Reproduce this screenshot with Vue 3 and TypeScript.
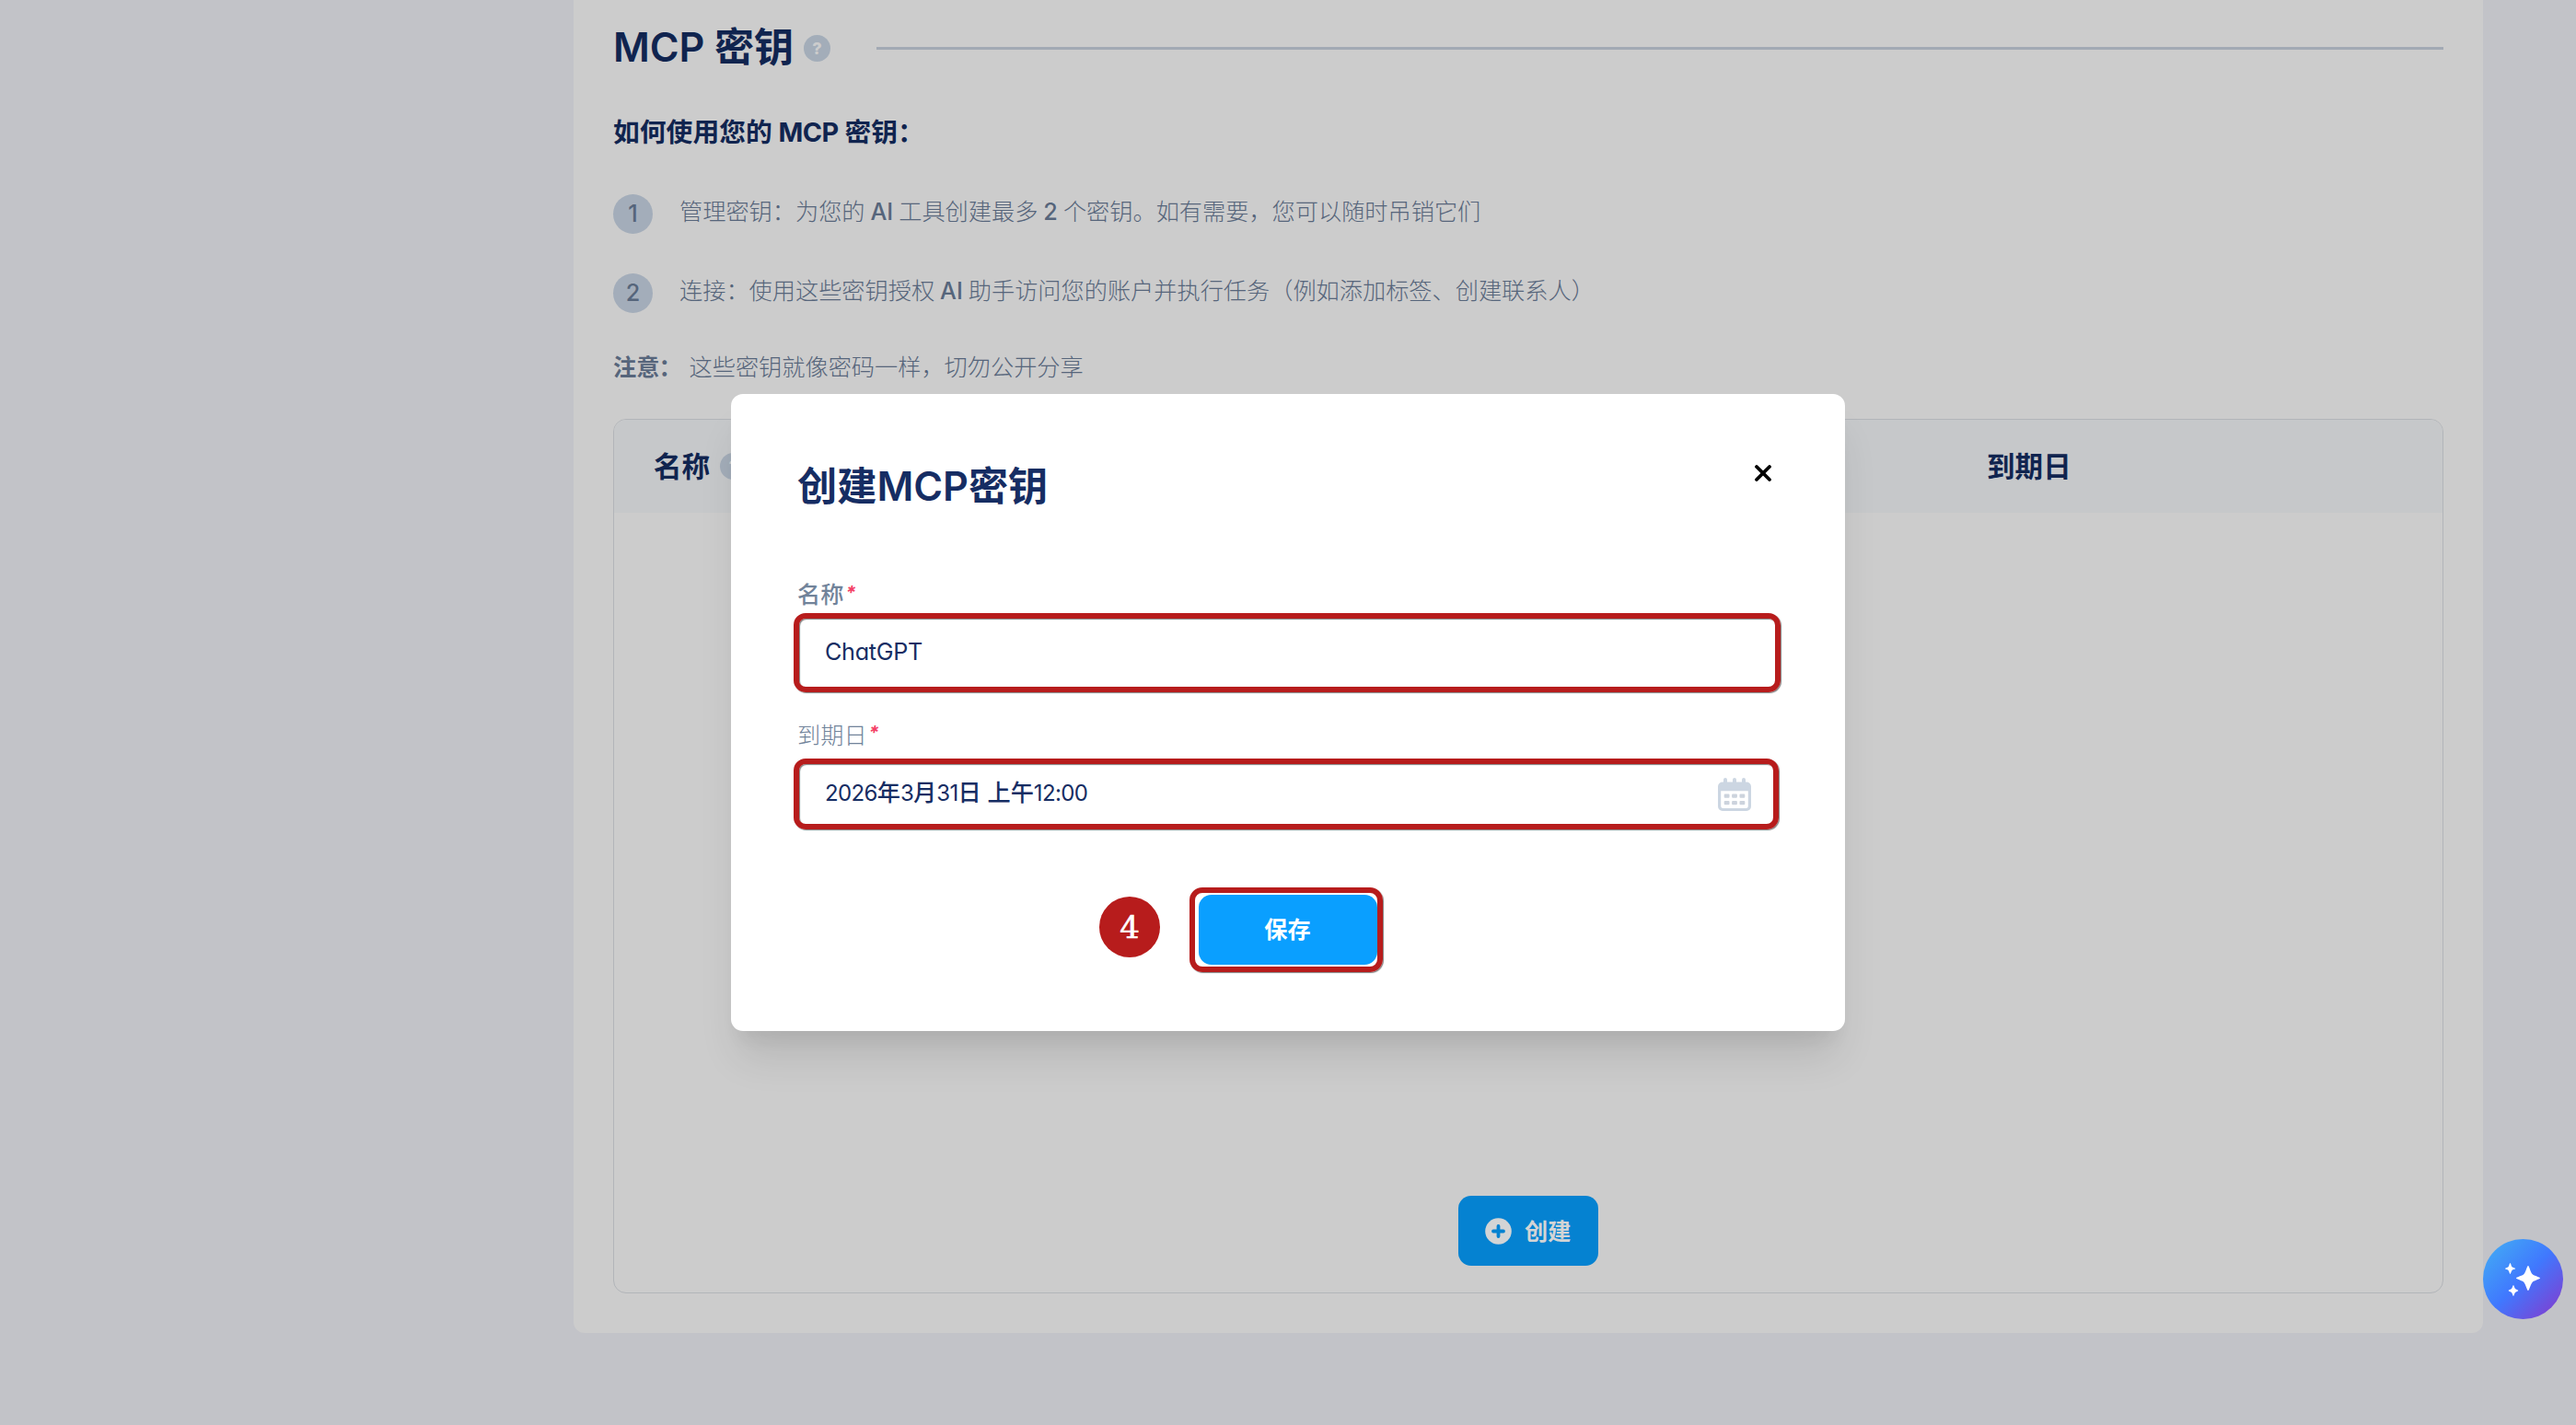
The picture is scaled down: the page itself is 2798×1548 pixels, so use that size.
<script setup lang="ts">
import { ref } from 'vue'

interface Part {
  text: string
  latin?: boolean
}

const steps: Part[][] = [
  [
    { text: '管理密钥：为您的' },
    { text: 'AI', latin: true },
    { text: '工具创建最多' },
    { text: '2', latin: true },
    { text: '个密钥。如有需要，您可以随时吊销它们' },
  ],
  [
    { text: '连接：使用这些密钥授权' },
    { text: 'AI', latin: true },
    { text: '助手访问您的账户并执行任务（例如添加标签、创建联系人）' },
  ],
]

const name = ref('ChatGPT')
</script>

<template>
  <div class="page">
    <main class="card">
      <header class="title-row">
        <h1>MCP 密钥</h1>
        <span class="help">?</span>
        <i class="rule"></i>
      </header>
      <h2>如何使用您的 <span class="mcp">MCP</span> 密钥：</h2>
      <ol class="steps">
        <li v-for="(parts, i) in steps" :key="i">
          <span class="num">{{ i + 1 }}</span>
          <p><span v-for="(p, j) in parts" :key="j" :class="{ lat: p.latin }">{{ p.text }}</span></p>
        </li>
      </ol>
      <p class="note"><b>注意<span class="colon">：</span></b><span>这些密钥就像密码一样，切勿公开分享</span></p>
      <section class="table">
        <div class="thead">
          <div class="th"><span class="th-text">名称</span><span class="help">?</span></div>
          <div class="th second"><span class="th-text">到期日</span></div>
        </div>
        <div class="tbody">
          <button class="create">
            <svg width="29" height="29" viewBox="0 0 29 29">
              <circle cx="14.5" cy="14.5" r="14.3" fill="#d3d4d5" />
              <path d="M14.5 9v11M9 14.5h11" stroke="#0582d1" stroke-width="3.8" stroke-linecap="round" />
            </svg>
            <span class="btn-text">创建</span>
          </button>
        </div>
      </section>
    </main>

    <div class="overlay">
      <div class="modal" role="dialog">
        <div class="modal-head">
          <h3>创建MCP密钥</h3>
          <svg class="close" width="20" height="20" viewBox="0 0 20 20">
            <path d="M3 3l14 14M17 3L3 17" stroke="#000" stroke-width="3.8" stroke-linecap="round" />
          </svg>
        </div>
        <label class="label strong">名称<em>*</em></label>
        <div class="field name"><span>{{ name }}</span></div>
        <label class="label light">到期日<em>*</em></label>
        <div class="field date">
          <span class="value"><span class="d">2026</span>年<span class="d">3</span>月<span class="d">31</span>日 上午<span class="d">12:00</span></span>
          <svg width="36" height="36" viewBox="0 0 36 36">
            <path fill="#ccd6e2" fill-rule="evenodd" d="M6 2a2 2 0 0 1 4 0v2.500h6V2a2 2 0 0 1 4 0v2.500h6V2a2 2 0 0 1 4 0v2.500h1a5 5 0 0 1 5 5V31a5 5 0 0 1-5 5H5a5 5 0 0 1-5-5V9.500a5 5 0 0 1 5-5h1zM3.200 14.300V30.500a2.500 2.500 0 0 0 2.500 2.500h24.600a2.500 2.500 0 0 0 2.500-2.500V14.300z" />
            <g fill="#ccd3dd">
              <rect v-for="k in 6" :key="k" :x="6.700 + ((k - 1) % 3) * 8.400" :y="k < 4 ? 17.500 : 25" width="5.800" height="4.300" rx="1" />
            </g>
          </svg>
        </div>
        <div class="actions">
          <span class="marker">4</span>
          <div class="ring"><button class="save">保存</button></div>
        </div>
      </div>
    </div>

    <div class="fab">
      <svg width="87" height="87" viewBox="0 0 87 87" fill="#fff">
        <path d="M49 29c1.200 0 2.800 8 4.800 9.300C55.500 40 62 41.500 62 42.500S55.500 45 53.800 46.700C51.800 48.500 50.200 56 49 56s-2.800-7.500-4.800-9.300C42.500 45 36 43.500 36 42.500s6.500-2.500 8.200-4.200C46.200 37 47.800 29 49 29z" />
        <path d="M29.500 26c.6 0 1.200 3.400 2 4.200s3.800 1.300 3.800 1.900-3 1.100-3.800 1.900-1.400 4-2 4-1.200-3.200-2-4-3.600-1.300-3.600-1.900 2.800-1.100 3.600-1.900 1.400-4.200 2-4.200z" />
        <path d="M33 50c.6 0 1.200 3.200 2 4s3.300 1.400 3.300 2-2.500 1.200-3.300 2-1.400 4-2 4-1.200-3.200-2-4-3.400-1.400-3.400-2 2.600-1.200 3.400-2 1.400-4 2-4z" />
      </svg>
    </div>
  </div>
</template>

<style>
body {
  margin: 0;
}
</style>

<style scoped>
* {
  box-sizing: border-box;
}
.page {
  position: relative;
  width: 2798px;
  height: 1548px;
  overflow: hidden;
  background: #c2c3c8;
  font-family: Inter, 'Noto Sans CJK SC', sans-serif;
  color: #10244f;
}
h1,
h2,
h3,
p,
ol {
  margin: 0;
  padding: 0;
}
.card {
  margin-left: 623px;
  width: 2074px;
  height: 1448px;
  padding: 0 43px;
  background: #ccc;
  border-radius: 0 0 12px 12px;
}
.title-row {
  display: flex;
  align-items: center;
  height: 104px;
}
h1 {
  width: 207px;
  padding-bottom: 8px;
  font-size: 43.200px;
  font-weight: 600;
  letter-spacing: -0.1px;
  white-space: nowrap;
}
.help {
  display: flex;
  align-items: center;
  justify-content: center;
  width: 29px;
  height: 29px;
  border-radius: 50%;
  background: #a3adb9;
  color: #ccc;
  font-size: 18px;
  font-weight: 800;
}
.rule {
  margin-left: 50px;
  flex: 1;
  height: 3px;
  background: #a2a9b4;
}
h2 {
  height: 78px;
  line-height: 80px;
  font-size: 28.800px;
  font-weight: 700;
}
.mcp {
  letter-spacing: -0.6px;
}
.colon {
  margin-left: -1px;
}
.steps {
  margin-top: 29px;
  list-style: none;
}
li {
  display: flex;
  align-items: center;
  height: 43px;
  margin-bottom: 43px;
  color: #56657b;
  font-size: 25.200px;
}
li p {
  font-weight: 300;
  white-space: nowrap;
  line-height: 43px;
  margin-top: -4px;
}
.lat {
  font-weight: 500;
  margin: 0 6px;
}
.num {
  width: 43px;
  height: 43px;
  margin-right: 29px;
  border-radius: 50%;
  background: #a3adba;
  text-align: center;
  line-height: 42px;
  font-weight: 500;
}
.note {
  display: flex;
  height: 40px;
  margin: -4px 0 36px;
  line-height: 40px;
  font-size: 25.200px;
  font-weight: 300;
  color: #56657b;
}
.note b {
  width: 82.500px;
  font-weight: 700;
}
.table {
  display: flex;
  flex-direction: column;
  height: 950px;
  border: 1px solid #b2b5b9;
  border-radius: 14px;
  overflow: hidden;
}
.thead {
  display: flex;
  height: 101px;
  background: #c6c8ca;
}
.th {
  display: flex;
  align-items: center;
  width: 1448px;
  padding-left: 43px;
  font-size: 30.600px;
  font-weight: 600;
}
.th-text {
  padding-bottom: 3px;
}
.th .help {
  margin-left: 11px;
}
.th.second {
  width: auto;
}
.tbody {
  flex: 1;
  display: flex;
  align-items: flex-end;
  justify-content: center;
  padding-bottom: 29px;
}
button {
  border: 0;
  font-family: inherit;
  font-size: 25.200px;
  font-weight: 700;
  border-radius: 14px;
}
.create {
  display: flex;
  align-items: center;
  gap: 14px;
  width: 152px;
  height: 76px;
  padding: 0 0 0 29px;
  background: #0582d1;
  color: #d3d4d5;
}
.btn-text {
  padding-bottom: 3px;
}
.overlay {
  position: absolute;
  inset: 0;
  display: flex;
  align-items: center;
  justify-content: center;
}
.modal {
  width: 1210px;
  height: 692px;
  padding: 0 70px 0 68px;
  background: #fff;
  border-radius: 13px;
  box-shadow: 0 36px 45px -9px rgba(0, 0, 0, 0.11), 0 18px 18px -9px rgba(0, 0, 0, 0.05);
  color: #162d63;
}
.modal-head {
  display: flex;
  justify-content: space-between;
  height: 198px;
  padding: 66px 9px 0 4px;
}
h3 {
  height: 70px;
  line-height: 69px;
  font-size: 43.200px;
  font-weight: 600;
}
.close {
  margin-top: 10px;
}
.label {
  display: flex;
  height: 40px;
  padding-left: 4px;
  line-height: 40px;
  font-size: 25.200px;
  color: #71839a;
}
.label em {
  margin-left: 2px;
  color: #f43f66;
  font-weight: 700;
  font-size: 20px;
  line-height: 37px;
}
.strong {
  font-weight: 500;
}
.light {
  margin-top: 26px;
  height: 46px;
  line-height: 42px;
  font-weight: 300;
}
.field {
  display: flex;
  align-items: center;
  justify-content: space-between;
  border: 6px solid #b71c1c;
  border-radius: 13px;
  box-shadow: 1px 1px 1px rgba(0, 0, 0, 0.5), inset 1px 1px 1px rgba(0, 0, 0, 0.5);
  padding: 0 24px 0 28px;
  font-size: 25.200px;
  font-feature-settings: 'cv11';
  white-space: nowrap;
}
.name {
  width: 1072px;
  height: 86px;
  letter-spacing: -0.3px;
}
.name span {
  padding-bottom: 2px;
}
.date {
  width: 1070px;
  height: 77px;
}
.value {
  padding-bottom: 7px;
  font-weight: 500;
}
.d {
  font-size: 24px;
  font-weight: 400;
  letter-spacing: -0.65px;
}
.actions {
  display: flex;
  align-items: center;
  margin: 63px 0 0 332px;
  gap: 32px;
}
.marker {
  width: 66px;
  height: 66px;
  margin-top: -6px;
  border-radius: 50%;
  background: #b71c1c;
  color: #fff;
  font: 34px/66px 'DejaVu Serif', serif;
  -webkit-text-stroke: 0.6px #fff;
  text-align: center;
}
.ring {
  width: 210px;
  height: 92px;
  padding: 2px 0 0 4px;
  border: 6px solid #b71c1c;
  border-radius: 14px;
  box-shadow: 1px 1px 1px rgba(0, 0, 0, 0.5);
}
.save {
  display: block;
  width: 194px;
  height: 76px;
  padding: 0 1px 4px 0;
  background: #0a9fff;
  color: #fff;
}
.fab {
  position: absolute;
  left: 2697px;
  top: 1346px;
  width: 87px;
  height: 87px;
  border-radius: 50%;
  background: linear-gradient(135deg, #42a8f5 8%, #4078fe 50%, #7e40d2 92%);
}
</style>
